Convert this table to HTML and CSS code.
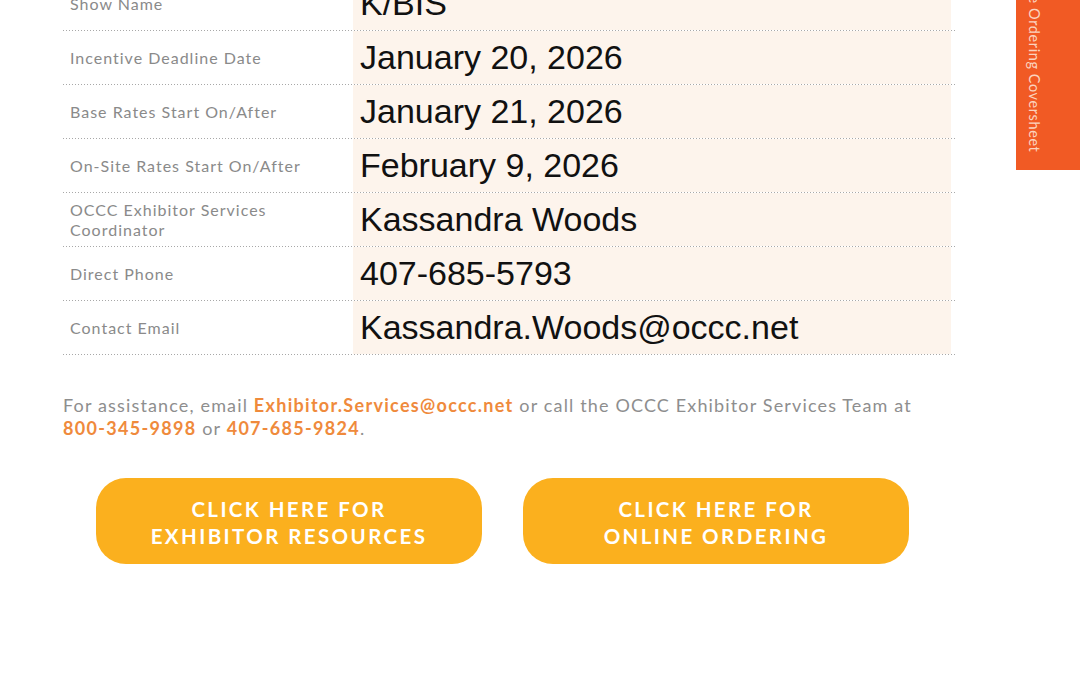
FILE: index.html
```html
<!DOCTYPE html>
<html>
<head>
<meta charset="utf-8">
<link rel="stylesheet" href="styles.css">
</head>
<body>
<div class="page">
  <div class="info">
    <div class="row"><div class="label">Show Name</div><div class="value">K/BIS</div></div>
    <div class="row"><div class="label">Incentive Deadline Date</div><div class="value">January 20, 2026</div></div>
    <div class="row"><div class="label">Base Rates Start On/After</div><div class="value">January 21, 2026</div></div>
    <div class="row"><div class="label">On-Site Rates Start On/After</div><div class="value">February 9, 2026</div></div>
    <div class="row"><div class="label">OCCC Exhibitor Services<br>Coordinator</div><div class="value">Kassandra Woods</div></div>
    <div class="row"><div class="label">Direct Phone</div><div class="value">407-685-5793</div></div>
    <div class="row"><div class="label">Contact Email</div><div class="value">Kassandra.Woods@occc.net</div></div>
  </div>
  <p class="assist">For assistance, email <span class="hl">Exhibitor.Services@occc.net</span> or call the OCCC Exhibitor Services Team at<br><span class="hl">800-345-9898</span> or <span class="hl">407-685-9824</span>.</p>
  <div class="buttons">
    <a class="btn">CLICK HERE FOR<br>EXHIBITOR RESOURCES</a>
    <a class="btn">CLICK HERE FOR<br>ONLINE ORDERING</a>
  </div>
</div>
<div class="tab"><span class="tab-text">Online Ordering Coversheet</span></div>
</body>
</html>
```
FILE: styles.css
```css
html, body {
  margin: 0;
  padding: 0;
  background: #ffffff;
}
body {
  width: 1080px;
  height: 675px;
  overflow: hidden;
  position: relative;
}
.page {
  padding-left: 63px;
}
.info {
  width: 892px;
  margin-top: -23px;
}
.row {
  display: grid;
  grid-template-columns: 290px 598px;
  height: 54px;
  padding-bottom: 1px;
  box-sizing: border-box;
  background-image: linear-gradient(to right, #a8a8a8 1px, transparent 1px);
  background-size: 3px 1px;
  background-repeat: repeat-x;
  background-position: left bottom;
}
.label {
  display: flex;
  align-items: center;
  padding-left: 7px;
  font-family: "Lato", sans-serif;
  font-size: 16px;
  font-weight: 400;
  letter-spacing: 1px;
  line-height: 20px;
  color: #8a8a8a;
}
.value {
  display: flex;
  align-items: center;
  background: #fdf4ec;
  padding-left: 7px;
  font-family: "Liberation Sans", Arial, sans-serif;
  font-size: 34px;
  color: #111111;
}
.assist {
  margin: 39px 0 0 0;
  font-family: "Lato", sans-serif;
  font-size: 18px;
  font-weight: 400;
  line-height: 23px;
  letter-spacing: 1.15px;
  color: #8e8e8e;
}
.hl {
  color: #ef8a3c;
  font-weight: 700;
  letter-spacing: 1.3px;
}
.buttons {
  display: flex;
  gap: 41px;
  margin-top: 38px;
  padding-left: 33px;
}
.btn {
  width: 386px;
  height: 86px;
  padding-top: 4px;
  box-sizing: border-box;
  border-radius: 30px;
  background: #fbb01e;
  color: #ffffff;
  display: flex;
  align-items: center;
  justify-content: center;
  text-align: center;
  font-family: "Lato", sans-serif;
  font-size: 20.5px;
  font-weight: 700;
  letter-spacing: 2.4px;
  line-height: 27px;
}
.tab {
  position: absolute;
  top: 0;
  right: 0;
  width: 64px;
  height: 170px;
  background: #f15a24;
  display: flex;
  flex-direction: column;
  justify-content: flex-end;
  align-items: flex-start;
  overflow: hidden;
  padding-bottom: 18px;
  padding-left: 10px;
  box-sizing: border-box;
}
.tab-text {
  writing-mode: vertical-rl;
  white-space: nowrap;
  font-family: "Lato", sans-serif;
  font-size: 14.5px;
  letter-spacing: 0.6px;
  line-height: 16px;
  color: #fbd3bf;
}
```
